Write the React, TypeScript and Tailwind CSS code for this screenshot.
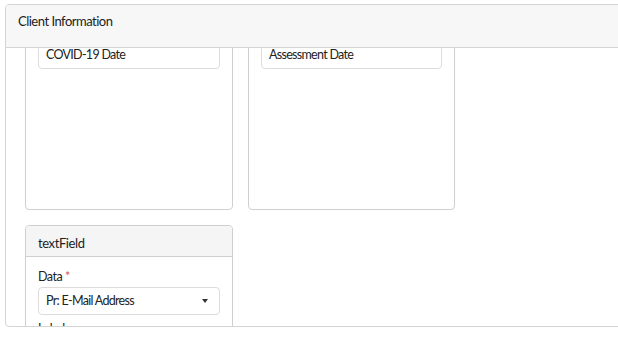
import { useLayoutEffect, useRef } from "react";

const font = { fontFamily: 'Lato, "Segoe UI", Arial, sans-serif' };

function Caret() {
  return <span className="h-0 w-0 border-x-[3px] border-t-[4px] border-x-transparent border-t-[#333]" />;
}

function SelectBox({ value }: { value: string }) {
  return (
    <div className="flex h-[28px] items-center justify-between rounded-[4px] border border-[#dcdcdc] bg-white pl-[7px] pr-[11px] text-[12.5px] tracking-[-0.7px] text-[#222]">
      <span>{value}</span>
      <Caret />
    </div>
  );
}

function InputBox({ value }: { value: string }) {
  return (
    <div className="flex h-[28px] items-center rounded-[4px] border border-[#dcdcdc] bg-white pl-[7px] text-[12.5px] tracking-[-0.7px] text-[#222]">
      {value}
    </div>
  );
}

function FieldCard({ title, data, label }: { title: string; data: string; label: string }) {
  return (
    <div className="min-h-[283px] overflow-hidden rounded-[4px] border border-[#cfcfcf] bg-white">
      <div className="flex h-[31px] items-center border-b border-[#cfcfcf] bg-[#f5f5f5] px-[12px] pt-[5px] text-[13px] tracking-[-0.4px] text-[#222]">
        {title}
      </div>
      <div className="px-[12px] pt-[11px]">
        <div className="mb-[2px] text-[12.5px] leading-[17px] tracking-[-0.5px] text-[#222]">
          Data <span className="text-[#d9534f]">*</span>
        </div>
        <SelectBox value={data} />
        <div className="mb-[2px] mt-[5px] text-[12.5px] leading-[17px] tracking-[-0.5px] text-[#222]">Label</div>
        <InputBox value={label} />
      </div>
    </div>
  );
}

export default function App() {
  const bodyRef = useRef<HTMLDivElement>(null);

  useLayoutEffect(() => {
    if (bodyRef.current) bodyRef.current.scrollTop = 141;
  }, []);

  return (
    <div className="h-[342px] w-[618px] overflow-hidden bg-white" style={font}>
      <div className="ml-[5px] mt-[4px] w-[640px] overflow-hidden rounded-[4px] border border-[#d4d4d4]">
        <div className="h-[43px] border-b border-[#d4d4d4] bg-[#f7f7f7] px-[12px] pt-[8px] text-[13px] leading-[17px] tracking-[-0.5px] text-[#222]">
          Client Information
        </div>
        <div ref={bodyRef} className="h-[278px] overflow-hidden px-[19px] pt-[20px]">
          <div className="grid grid-cols-[208px_207px] gap-x-[15px] gap-y-[15px]">
            <FieldCard title="dateField" data="Pr: COVID-19 Date" label="COVID-19 Date" />
            <FieldCard title="dateField" data="Pr: Assessment Date" label="Assessment Date" />
            <FieldCard title="textField" data="Pr: E-Mail Address" label="E-Mail Address" />
          </div>
        </div>
      </div>
    </div>
  );
}
